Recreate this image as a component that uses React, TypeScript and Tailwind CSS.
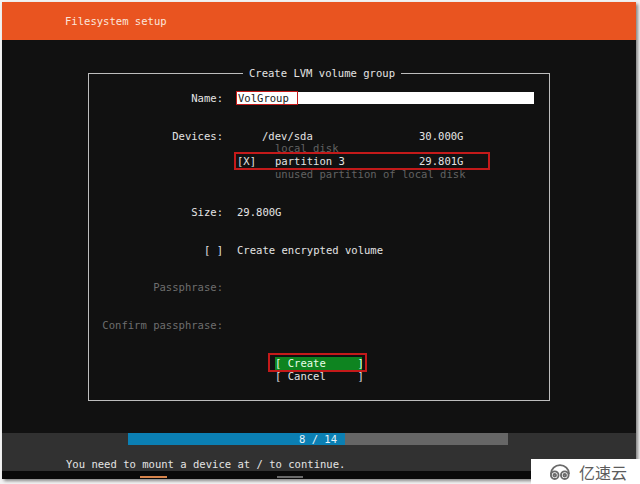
import { FC } from "react";

const mono = { fontFamily: '"DejaVu Sans Mono", "Liberation Mono", monospace' };

const Row: FC<{ label?: string; dim?: boolean; children?: React.ReactNode }> = ({
  label,
  dim,
  children,
}) => (
  <div className="flex h-[12.65px] items-center">
    <div
      className={`w-[134px] shrink-0 text-right whitespace-pre ${
        dim ? "text-[#6e6e6e]" : "text-[#e4e4e4]"
      }`}
    >
      {label}
    </div>
    <div className="ml-[14px] flex-1 flex items-center whitespace-pre">{children}</div>
  </div>
);

const Blank: FC<{ n?: number }> = ({ n = 1 }) => (
  <div style={{ height: `${12.65 * n}px` }} />
);

const CloudLogo: FC = () => (
  <svg width="26" height="19" viewBox="0 0 24 18" fill="none" stroke="#6a6a6a" strokeWidth="1.8" strokeLinecap="round">
    <path d="M3.5 11 A8.5 8 0 0 1 20.5 11" />
    <circle cx="7" cy="12.5" r="3.6" />
    <circle cx="7" cy="12.5" r="1.2" />
    <circle cx="16.5" cy="12.5" r="3.6" />
    <circle cx="16.5" cy="12.5" r="1.2" />
  </svg>
);

const App: FC = () => {
  return (
    <div className="relative w-[640px] h-[484px] bg-[#f3f3f3] overflow-hidden pl-[2px] pt-[2px]" style={mono}>
      <div className="w-[634px] h-[477px] flex flex-col text-[10.55px] leading-[12.65px] text-[#e4e4e4] shadow-[2px_2px_3px_rgba(0,0,0,0.45)]">
        {/* header */}
        <div className="h-[38px] shrink-0 bg-[#e95420] flex items-center pl-[63px] text-[#fbe6dc]">
          Filesystem setup
        </div>

        {/* body */}
        <div className="h-[393px] shrink-0 bg-[#111111] pt-[26.5px]">
          <div className="ml-[86px] w-[462px]">
            <div className="flex h-[12.65px]">
              <div className="flex-[1.04] mt-[6px] border-t border-l border-[#bdbdbd]" />
              <div className="px-[6px] whitespace-pre">Create LVM volume group</div>
              <div className="flex-1 mt-[6px] border-t border-r border-[#bdbdbd]" />
            </div>
            <div className="border-x border-b border-[#bdbdbd] pb-[17px]">
              <Blank />
              <Row label="Name:">
                <div className="relative -ml-[1px] w-[298px] h-[12px] bg-white text-[#202020] pl-[2px] flex items-center">
                  VolGroup
                  <div className="absolute left-0 -top-[1px] w-[62px] h-[14px] border-[1.5px] border-[#c41a1a]" />
                </div>
              </Row>
              <Blank n={2} />
              <Row label="Devices:">
                <div className="w-[182px] pl-[25px]">/dev/sda</div>
                <div>30.000G</div>
              </Row>
              <Row>
                <div className="pl-[38px] text-[#626262]">local disk</div>
              </Row>
              <Row>
                <div className="relative flex">
                  <div className="w-[38px]">[X]</div>
                  <div className="w-[144px]">partition 3</div>
                  <div>29.801G</div>
                  <div className="absolute -left-[3px] -top-[3px] w-[256px] h-[18px] border-2 border-[#c41a1a]" />
                </div>
              </Row>
              <Row>
                <div className="pl-[38px] text-[#626262]">unused partition of local disk</div>
              </Row>
              <Blank n={2} />
              <Row label="Size:">29.800G</Row>
              <Blank n={2} />
              <Row label="[ ]">Create encrypted volume</Row>
              <Blank n={2} />
              <Row label="Passphrase:" dim />
              <Blank n={2} />
              <Row label="Confirm passphrase:" dim />
              <Blank n={2} />
              <Row>
                <div className="relative ml-[38px] w-[87px] h-[13px] bg-[#0e8420] text-[#eaffea] flex items-center">
                  {"[ Create     ]"}
                  <div className="absolute -left-[7px] -top-[4px] w-[99px] h-[19px] border-2 border-[#c41a1a]" />
                </div>
              </Row>
              <Row>
                <div className="ml-[38px] w-[87px]">{"[ Cancel     ]"}</div>
              </Row>
            </div>
          </div>
        </div>

        {/* footer */}
        <div className="h-[38px] shrink-0 bg-[#313131] flex flex-col">
          <div className="relative ml-[126px] w-[380px] h-[13px] bg-[#666666] flex">
            <div className="w-[217px] h-full bg-[#0b7fb3]" />
            <div className="absolute inset-0 flex items-center justify-center text-[#e8f4fa]">8 / 14</div>
          </div>
          <div className="mt-[13px] pl-[64px] whitespace-pre">You need to mount a device at / to continue.</div>
        </div>
        <div className="h-[8px] shrink-0 bg-[#0a0a0a] flex items-end pb-[1px]">
          <div className="ml-[138px] w-[27px] h-[2px] bg-[#d7844c]" />
          <div className="ml-[110px] w-[26px] h-[2px] bg-[#6a6a6a]" />
        </div>
      </div>

      {/* watermark */}
      <div className="absolute left-[531px] top-[459px] w-[109px] h-[25px] bg-white flex items-center pl-[16px] gap-[6px]">
        <CloudLogo />
        <span
          className="text-[16px] leading-none text-[#5c5c5c]"
          style={{ fontFamily: '"Noto Sans CJK SC", "Noto Sans", sans-serif' }}
        >
          亿速云
        </span>
      </div>
    </div>
  );
};

export default App;
